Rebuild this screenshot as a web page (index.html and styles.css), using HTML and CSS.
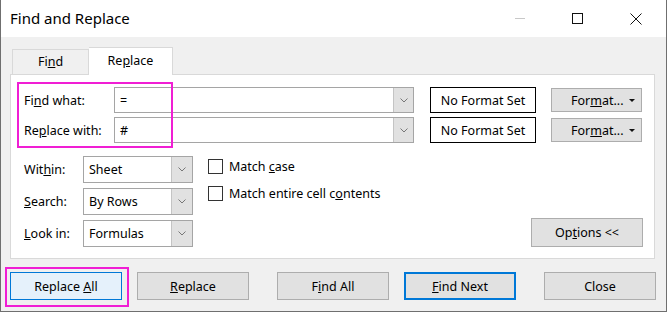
FILE: index.html
```html
<!DOCTYPE html>
<html lang="en">
<head>
    <meta charset="UTF-8">
    <title>Find and Replace</title>
    <link rel="stylesheet" href="styles.css">
</head>
<body>
    <div class="window">
        <div class="titlebar">
            <span class="title">Find and Replace</span>
            <div class="controls">
                <span class="ctl ctl-min"></span>
                <span class="ctl ctl-max"></span>
                <svg class="ctl ctl-close" width="12" height="12" viewBox="0 0 12 12">
                    <path d="M0.5 0.5 L11.5 11.5 M11.5 0.5 L0.5 11.5" stroke="#111" stroke-width="1" fill="none"/>
                </svg>
            </div>
        </div>

        <div class="tabs">
            <div class="tab">Fi<u>n</u>d</div>
            <div class="tab active">Re<u>p</u>lace</div>
        </div>

        <div class="panel">
            <div class="find-grid">
                <label class="lbl"><span>Fi<u>n</u>d what:</span></label>
                <div class="combo">
                    <span class="combo-text">=</span>
                    <span class="combo-btn"><svg width="8" height="5" viewBox="0 0 8 5"><path d="M0.5 0.5 L4 4 L7.5 0.5" stroke="#777" fill="none"/></svg></span>
                </div>
                <div class="nofmt">No Format Set</div>
                <button class="btn fmt">For<u>m</u>at... <span class="caret"></span></button>

                <label class="lbl"><span>Re<u>p</u>lace with:</span></label>
                <div class="combo">
                    <span class="combo-text">#</span>
                    <span class="combo-btn"><svg width="8" height="5" viewBox="0 0 8 5"><path d="M0.5 0.5 L4 4 L7.5 0.5" stroke="#777" fill="none"/></svg></span>
                </div>
                <div class="nofmt">No Format Set</div>
                <button class="btn fmt">For<u>m</u>at... <span class="caret"></span></button>
            </div>

            <div class="options">
                <div class="opt-grid">
                    <label class="lbl"><span>Wit<u>h</u>in:</span></label>
                    <div class="select">
                        <span class="combo-text">Sheet</span>
                        <span class="combo-btn"><svg width="8" height="5" viewBox="0 0 8 5"><path d="M0.5 0.5 L4 4 L7.5 0.5" stroke="#777" fill="none"/></svg></span>
                    </div>
                    <label class="lbl"><span><u>S</u>earch:</span></label>
                    <div class="select">
                        <span class="combo-text">By Rows</span>
                        <span class="combo-btn"><svg width="8" height="5" viewBox="0 0 8 5"><path d="M0.5 0.5 L4 4 L7.5 0.5" stroke="#777" fill="none"/></svg></span>
                    </div>
                    <label class="lbl"><span><u>L</u>ook in:</span></label>
                    <div class="select">
                        <span class="combo-text">Formulas</span>
                        <span class="combo-btn"><svg width="8" height="5" viewBox="0 0 8 5"><path d="M0.5 0.5 L4 4 L7.5 0.5" stroke="#777" fill="none"/></svg></span>
                    </div>
                </div>
                <div class="checks">
                    <div class="check"><span class="box"></span><span>Match <u>c</u>ase</span></div>
                    <div class="check"><span class="box"></span><span>Match entire cell c<u>o</u>ntents</span></div>
                </div>
                <button class="btn options-btn">Op<u>t</u>ions &lt;&lt;</button>
            </div>
        </div>

        <div class="actions">
            <button class="btn btn-hover">Replace <u>A</u>ll</button>
            <button class="btn gap-s"><u>R</u>eplace</button>
            <button class="btn gap-l">F<u>i</u>nd All</button>
            <button class="btn btn-default gap-s"><u>F</u>ind Next</button>
            <button class="btn gap-l">Close</button>
        </div>

        <div class="mark mark-labels"></div>
        <div class="mark mark-replace-all"></div>
    </div>
</body>
</html>
```

FILE: styles.css
```css
* {
    margin: 0;
    padding: 0;
    box-sizing: border-box;
}

body {
    font-family: 'Noto Sans', 'Open Sans', sans-serif;
    font-size: 12px;
    color: #000;
    background: #fff;
}

.window {
    position: relative;
    width: 667px;
    height: 312px;
    background: #f0f0f0;
    border: 1px solid #6f6f6f;
    border-top: none;
    display: flex;
    flex-direction: column;
}

/* title bar */
.titlebar {
    height: 37px;
    background: #fff;
    display: flex;
    align-items: center;
    padding-left: 9px;
}

.title {
    font-size: 15px;
    padding-bottom: 1px;
}

.controls {
    margin-left: auto;
    display: flex;
    align-items: center;
}

.ctl-min {
    width: 10px;
    height: 1px;
    background: #c8c8c8;
    margin-right: 47px;
}

.ctl-max {
    width: 11px;
    height: 11px;
    border: 1px solid #111;
    margin-right: 47px;
}

.ctl-close {
    margin-right: 24px;
}

/* tabs */
.tabs {
    display: flex;
    align-items: flex-end;
    height: 27px;
    margin-top: 10px;
    margin-left: 11px;
    position: relative;
    z-index: 1;
}

.tab {
    width: 77px;
    height: 25px;
    border: 1px solid #d9d9d9;
    border-bottom: none;
    background: #f0f0f0;
    text-align: center;
    line-height: 24px;
    font-size: 12.5px;
}

.tab.active {
    width: 84px;
    height: 28px;
    margin-bottom: -1px;
    background: #fff;
    border-left: none;
    line-height: 26px;
}

/* panel */
.panel {
    height: 185px;
    margin: 0 11px 0 9px;
    background: #fff;
    border: 1px solid #d9d9d9;
    padding: 12px 11px 10px 13px;
}

.lbl {
    display: flex;
    align-items: center;
    font-size: 12.5px;
}

.find-grid {
    display: grid;
    grid-template-columns: 90px 300px 122px 106px;
    grid-auto-rows: 26px;
    row-gap: 4px;
}

.combo,
.select {
    display: flex;
    border: 1px solid #a5a5a5;
    background: #fff;
}

.combo-text {
    flex: 1;
    display: flex;
    align-items: center;
    padding-left: 5px;
    font-size: 12.5px;
}

.combo-btn {
    width: 20px;
    background: #e1e1e1;
    border-left: 1px solid #c4c4c4;
    display: flex;
    align-items: center;
    justify-content: center;
}

.nofmt {
    margin-left: 16px;
    border: 1px solid #000;
    display: flex;
    align-items: center;
    justify-content: center;
    font-size: 12.5px;
}

.btn {
    font-family: inherit;
    font-size: 12.5px;
    color: #000;
    background: #e1e1e1;
    border: 1px solid #adadad;
}

.fmt {
    height: 24px;
    align-self: center;
    margin-left: 15px;
    position: relative;
    text-align: left;
    padding-left: 19px;
}

.caret {
    position: absolute;
    right: 6px;
    top: 10px;
    border-left: 3px solid transparent;
    border-right: 3px solid transparent;
    border-top: 3px solid #111;
}

/* options */
.options {
    display: flex;
    margin-top: 13px;
}

.opt-grid {
    display: grid;
    grid-template-columns: 59px 110px;
    grid-auto-rows: 27px;
    row-gap: 5px;
}

.select .combo-btn {
    width: 21px;
}

.checks {
    margin-left: 15px;
    padding-top: 2px;
    display: flex;
    flex-direction: column;
    gap: 10px;
}

.check {
    display: flex;
    align-items: center;
    font-size: 12.5px;
}

.box {
    width: 15px;
    height: 15px;
    border: 1px solid #333;
    background: #fff;
    margin-right: 6px;
}

.options-btn {
    margin-left: auto;
    align-self: flex-end;
    width: 112px;
    height: 29px;
}

/* bottom buttons */
.actions {
    display: flex;
    margin-top: 13px;
    padding-left: 9px;
}

.actions .btn {
    width: 112px;
    height: 28px;
}

.gap-s {
    margin-left: 15px;
}

.gap-l {
    margin-left: 28px;
}

.btn-hover {
    background: #e5f1fb;
    border-color: #0078d7;
}

.btn-default {
    border: 2px solid #0078d7;
}

/* highlight frames */
.mark {
    position: absolute;
    border: 2px solid #f01ed4;
}

.mark-labels {
    left: 16px;
    top: 82px;
    width: 156px;
    height: 66px;
}

.mark-replace-all {
    left: 4px;
    top: 267px;
    width: 124px;
    height: 40px;
}
```
